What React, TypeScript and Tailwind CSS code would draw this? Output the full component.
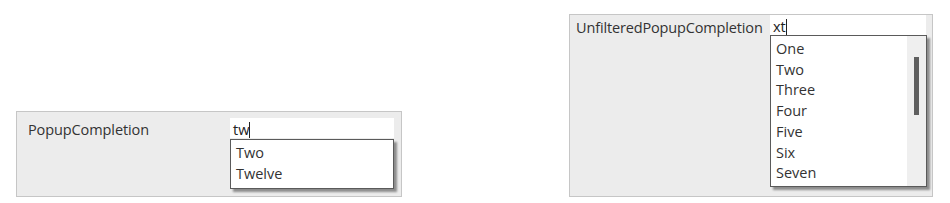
import React from 'react';

const font = { fontFamily: '"Open Sans", "Noto Sans", sans-serif' };

function Caret() {
  return <span className="inline-block w-[1px] h-[16px] bg-[#222] align-middle -mt-[2px]" />;
}

export default function App() {
  const filtered = ['Two', 'Twelve'];
  const all = ['One', 'Two', 'Three', 'Four', 'Five', 'Six', 'Seven'];

  return (
    <div className="w-[950px] h-[203px] bg-white flex items-start overflow-hidden text-[#333] text-[14.5px] font-medium" style={font}>
      {/* PopupCompletion */}
      <div className="ml-[16px] mt-[111px] w-[386px] h-[86px] border border-[#c6c6c6] bg-[#ececec] flex items-start pt-[6px] pl-[11px] pr-[7px]">
        <div className="w-[202px] leading-[24px] tracking-[-0.1px]">PopupCompletion</div>
        <div className="relative w-[164px] h-[20px] bg-white">
          <div className="pl-[3px] leading-[24px] text-[#222]">
            tw<Caret />
          </div>
          <div className="absolute top-[21px] left-0 w-[164px] h-[50px] bg-white border border-[#5a5a5a] shadow-[3px_3px_2px_rgba(0,0,0,0.4)] pt-[2px] pl-[5px]">
            {filtered.map((item) => (
              <div key={item} className="leading-[21px]">{item}</div>
            ))}
          </div>
        </div>
      </div>

      {/* UnfilteredPopupCompletion */}
      <div className="ml-[167px] mt-[14px] w-[364px] h-[183px] border border-[#c6c6c6] bg-[#ececec] flex items-start pl-[6px]">
        <div className="w-[194px] leading-[25px] tracking-[-0.15px]">UnfilteredPopupCompletion</div>
        <div className="relative w-[156px] h-[20px] bg-white">
          <div className="pl-[3px] leading-[24px] text-[#222]">
            xt<Caret />
          </div>
          <div className="absolute top-[20px] left-0 w-[157px] h-[152px] bg-white border border-[#5a5a5a] shadow-[3px_3px_2px_rgba(0,0,0,0.4)] flex">
            <div className="flex-1 pt-[3px] pl-[5px]">
              {all.map((item) => (
                <div key={item} className="leading-[20.7px]">{item}</div>
              ))}
            </div>
            <div className="w-[19px] bg-[#efefef] flex justify-center pt-[21px]">
              <div className="w-[5px] h-[58px] bg-[#5f5f5f]" />
            </div>
          </div>
        </div>
      </div>
    </div>
  );
}
